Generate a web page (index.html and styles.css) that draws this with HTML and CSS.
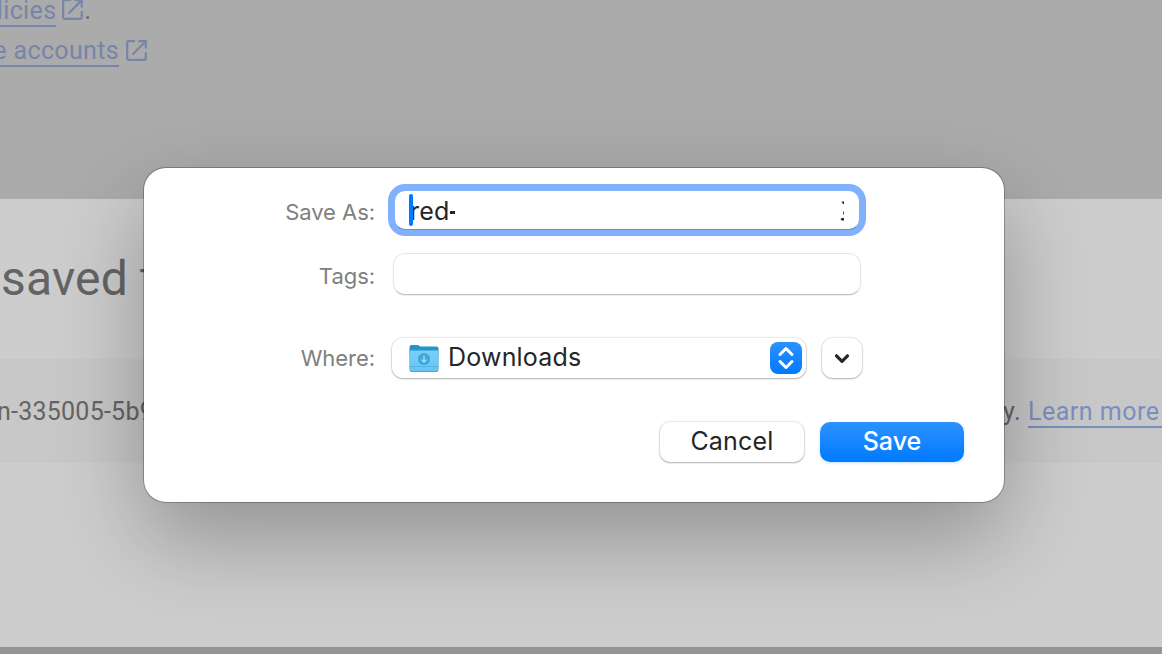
FILE: index.html
```html
<!DOCTYPE html>
<html lang="en">
<head>
<meta charset="utf-8">
<title>Save As</title>
<link rel="stylesheet" href="styles.css">
</head>
<body>
<div class="page">
  <div class="backdrop">
    <p class="line line-policies"><a class="link">licies</a><svg class="external" viewBox="0 0 21 21"><path d="M9 1.2H2.4Q1.2 1.2 1.2 2.4V18.6Q1.2 19.8 2.4 19.8H18.6Q19.8 19.8 19.8 18.6V12M12.5 1.2H19.8V8.5M19.5 1.5L6.5 14.5"/></svg><span class="dot">.</span></p>
    <p class="line line-accounts"><a class="link">e accounts</a><svg class="external" viewBox="0 0 21 21"><path d="M9 1.2H2.4Q1.2 1.2 1.2 2.4V18.6Q1.2 19.8 2.4 19.8H18.6Q19.8 19.8 19.8 18.6V12M12.5 1.2H19.8V8.5M19.5 1.5L6.5 14.5"/></svg></p>
  </div>
  <div class="card">
    <h1 class="title">saved t</h1>
    <div class="band">
      <span class="file">n-335005-5b9</span>
      <span class="more"><span class="tail">y.</span><a class="link link-more">Learn more</a></span>
    </div>
  </div>
</div>
<form class="dialog">
  <div class="row row-name">
    <span class="label">Save As:</span>
    <div class="field focused"><span class="caret"></span><span class="name">red<i class="dash"></i></span><svg class="clip" viewBox="0 0 5 20"><path d="M1.5 .5H4V3H3ZM3.2 10.500H4V13.500H3.200ZM.5 18L2 17H4V19.500H1.500Z"/></svg></div>
  </div>
  <div class="row row-tags">
    <span class="label">Tags:</span>
    <div class="field tags"></div>
  </div>
  <div class="row row-where">
    <span class="label">Where:</span>
    <div class="popup">
      <svg class="folder" viewBox="0 0 32 30">
        <defs><linearGradient id="front" x1="0" y1="0" x2="0" y2="1"><stop offset="0" stop-color="#79d0f8"/><stop offset="1" stop-color="#68c4f3"/></linearGradient></defs>
        <path class="folder-shade" d="M1.500 8H30.500V27Q30.500 29 28.500 29H3.500Q1.500 29 1.500 27Z"/>
        <path class="folder-back" d="M1.500 4Q1.500 2 3.500 2H9.500Q10.500 2 11.500 3L12.500 3.500H28.500Q30.500 3.500 30.500 5.500V12H1.500Z"/>
        <path fill="url(#front)" d="M1.500 9Q1.500 7.500 3 7.500H29Q30.500 7.500 30.500 9V26Q30.500 28 28.500 28H3.500Q1.500 28 1.500 26Z"/>
        <path class="folder-edge" d="M1.500 23.500H30.500"/>
        <circle class="folder-badge" cx="16" cy="16" r="6"/>
        <path class="folder-arrow" d="M16 12.500V19M13.300 16.500L16 19.200L18.700 16.500"/>
      </svg>
      <span class="place">Downloads</span>
      <span class="stepper"><svg viewBox="0 0 32 32"><path d="M10 12.500L16 6.500L22 12.500M10 19.500L16 25.500L22 19.500"/></svg></span>
    </div>
    <div class="expand"><svg viewBox="0 0 42 42"><path d="M15.500 18.800L21 24.300L26.500 18.800"/></svg></div>
  </div>
  <div class="actions">
    <button class="button cancel" type="button"><span>Cancel</span></button>
    <button class="button save" type="button"><span>Save</span></button>
  </div>
</form>
</body>
</html>
```
FILE: styles.css
```css
* { box-sizing: border-box; }
body { margin: 0; width: 1162px; height: 654px; overflow: hidden; font-family: Inter, "Liberation Sans", sans-serif; }
p, h1 { margin: 0; font-weight: 400; }
svg { display: block; fill: none; }
.page { display: flex; flex-direction: column; width: 1162px; height: 654px; background: #959595; font-family: Roboto, sans-serif; color: #646464; font-size: 25px; }
.backdrop { height: 199px; background: #ababab; }
.line { display: flex; justify-content: flex-end; align-items: flex-start; white-space: nowrap; overflow: hidden; height: 40px; }
.line-policies { width: 91px; height: 27px; }
.line-policies .link { margin-top: -5px; }
.line-accounts { width: 147px; margin-top: 8px; }
.link { color: #7685a8; height: 32px; line-height: 31px; border-bottom: 2px solid #7685a8; letter-spacing: .35px; }
.external { flex: none; width: 21px; height: 21px; margin: 5px 0 0 7px; stroke: #7685a8; stroke-width: 2.2; }
.line-policies .external { margin-top: -1px; margin-left: 6px; }
.dot { line-height: 31px; margin-top: -5px; width: 8px; padding-left: 1px; }
.card { height: 448px; background: #cdcdcd; }
.title { display: flex; justify-content: flex-end; width: 156px; height: 160px; line-height: 160px; font-size: 48px; letter-spacing: .2px; white-space: nowrap; overflow: hidden; }
.band { display: flex; justify-content: space-between; align-items: center; height: 104px; background: #c8c8c8; overflow: hidden; }
.file { display: flex; justify-content: flex-end; width: 154px; white-space: nowrap; letter-spacing: .25px; }
.more { display: flex; width: 160px; line-height: 31px; padding-top: 1px; }
.tail { width: 26px; letter-spacing: .5px; padding-left: 1px; }
.link-more { width: 134px; flex: none; color: #798fc0; border-color: #798fc0; white-space: nowrap; letter-spacing: .5px; }
.dialog { position: absolute; left: 144px; top: 168px; width: 860px; height: 334px; padding-top: 22px; background: #fff; border-radius: 22px; box-shadow: 0 0 0 1px rgba(0,0,0,.25), 0 36px 88px rgba(0,0,0,.29); color: #262626; font-size: 25px; }
.row { display: flex; align-items: center; }
.label { width: 232px; padding-right: 1px; text-align: right; color: #808080; font-size: 22px; letter-spacing: -.05px; white-space: nowrap; }
.field { display: flex; align-items: center; background: #fff; border-radius: 11px; }
.row-name { height: 40px; }
.row-name .label { padding-top: 4px; }
.focused { width: 466px; height: 40px; margin-left: 18px; border: 1px solid #80b1fa; border-bottom-color: #5e93df; box-shadow: 0 0 0 6px #80b1fa; }
.caret { position: relative; z-index: 1; width: 4px; height: 32px; margin-left: 14px; border-radius: 2px; background: #007aff; }
.name { display: flex; align-items: center; margin: 2px 0 0 -3px; letter-spacing: .2px; }
.dash { width: 5px; height: 3px; margin: 3px 0 0 1px; background: #262626; }
.clip { width: 5px; height: 20px; margin: 1px 14px 0 auto; fill: #262626; }
.row-tags { height: 42px; margin-top: 23px; }
.row-tags .label { padding-top: 4px; }
.tags { width: 468px; height: 42px; margin-left: 17px; border: 1px solid #e6e6e6; border-bottom-color: #c0c0c0; box-shadow: 0 1px 1px rgba(0,0,0,.08); border-radius: 12px; }
.row-where { height: 40px; margin-top: 43px; }
.row-where .label { padding-bottom: 1px; }
.popup, .expand, .cancel { background: #fff; border-radius: 11px; box-shadow: 0 0 1px 1px rgba(0,0,0,.08), 0 1px 2px rgba(0,0,0,.26); }
.popup { display: flex; align-items: center; width: 414px; height: 40px; margin-left: 16px; padding: 0 4px 0 16px; }
.folder { width: 32px; height: 30px; }
.folder-shade { fill: #82949f; }
.folder-back { fill: #2295ca; }
.folder-edge { stroke: #51b5e6; stroke-width: 1; }
.folder-badge { fill: #40a5d7; }
.folder-arrow { stroke: #96ddfb; stroke-width: 1.5; }
.place { margin: -2px auto 0 8px; letter-spacing: .2px; }
.stepper { width: 32px; height: 32px; border-radius: 8px; background: linear-gradient(#2d91ff, #007aff); }
.stepper path { stroke: #fff; stroke-width: 3; stroke-linecap: round; stroke-linejoin: round; }
.expand { width: 40px; height: 40px; margin-left: 16px; }
.expand svg { width: 42px; height: 42px; margin: -1px; }
.expand path { stroke: #262626; stroke-width: 3.2; stroke-linecap: round; stroke-linejoin: round; }
.actions { display: flex; justify-content: flex-end; gap: 16px; margin-top: 44px; padding-right: 40px; }
.button { width: 144px; height: 40px; padding: 0 0 3px; border: 0; border-radius: 10px; font: 25px/36px Inter, sans-serif; letter-spacing: .2px; color: #262626; }
.save { color: #fff; background: linear-gradient(#2d91ff, #007aff); box-shadow: 0 1px 3px rgba(0,122,255,.25); font-weight: 500; letter-spacing: 0; }
```
